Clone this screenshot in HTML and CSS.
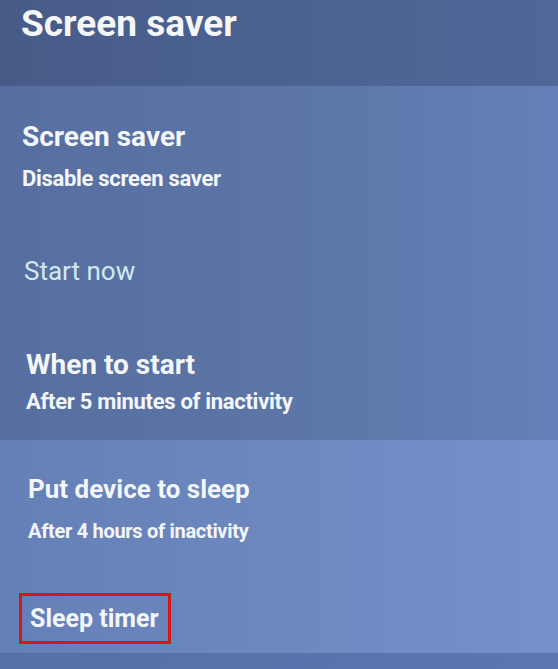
FILE: index.html
```html
<!DOCTYPE html>
<html lang="en">
<head>
<meta charset="utf-8">
<title>Screen saver</title>
<link rel="stylesheet" href="styles.css">
</head>
<body>
<div class="screen">
  <header class="header">
    <h1 class="page-title">Screen saver</h1>
  </header>
  <section class="group group-main">
    <div class="item item-first">
      <div class="item-title">Screen saver</div>
      <div class="item-sub">Disable screen saver</div>
    </div>
    <div class="item item-action">
      <div class="item-title action">Start now</div>
    </div>
    <div class="item item-when">
      <div class="item-title">When to start</div>
      <div class="item-sub sub-when">After 5 minutes of inactivity</div>
    </div>
  </section>
  <section class="group group-lower">
    <div class="item item-put">
      <div class="item-title title-small">Put device to sleep</div>
      <div class="item-sub sub-small">After 4 hours of inactivity</div>
    </div>
    <div class="item item-sleep">
      <div class="highlight">
        <div class="item-title title-sleep">Sleep timer</div>
      </div>
    </div>
  </section>
  <div class="group-bottom"></div>
</div>
</body>
</html>
```

FILE: styles.css
```css
html, body {
  margin: 0;
  padding: 0;
}
body {
  width: 558px;
  height: 669px;
  overflow: hidden;
  font-family: Roboto, "Liberation Sans", Arial, sans-serif;
  color: #f3f6fb;
  background: #5b77b0;
}
.screen {
  display: flex;
  flex-direction: column;
  height: 669px;
}
.header {
  height: 86px;
  box-sizing: border-box;
  padding: 2px 0 0 21px;
  background: linear-gradient(90deg, #475b87 0%, #4c6392 55%, #4f6799 100%);
}
.page-title {
  margin: 0;
  font-size: 37px;
  line-height: 44px;
  font-weight: bold;
  color: #f4f6fa;
}
.group-main {
  height: 354px;
  box-sizing: border-box;
  padding-top: 35px;
  background: linear-gradient(90deg, #566fa0 0%, #5c75a6 50%, #6480b8 100%);
}
.group-lower {
  height: 213px;
  box-sizing: border-box;
  padding-top: 33px;
  background: linear-gradient(90deg, #6580b6 0%, #6d89c0 55%, #7491cb 100%);
}
.group-bottom {
  flex: 1;
  background: linear-gradient(90deg, #5570a6 0%, #5b77b0 100%);
}
.item {
  padding-left: 22px;
}
.item-title {
  font-size: 28px;
  line-height: 32px;
  font-weight: bold;
}
.title-small {
  font-size: 26px;
}
.title-sleep {
  font-size: 25px;
  line-height: 30px;
}
.item-sub {
  margin-top: 12px;
  font-size: 22px;
  line-height: 28px;
  font-weight: bold;
  letter-spacing: -0.3px;
}
.sub-small {
  font-size: 20px;
}
.action {
  font-size: 26px;
  font-weight: normal;
  color: #d2e9f3;
}
.item-action {
  margin-top: 62px;
  padding-left: 24px;
}
.item-when {
  margin-top: 62px;
  padding-left: 26px;
}
.sub-when {
  margin-top: 7px;
}
.item-put {
  padding-left: 28px;
}
.item-sleep {
  margin-top: 48px;
  padding-left: 19px;
}
.highlight {
  display: inline-block;
  border: 3px solid #d8141c;
  padding: 8px 9px 7px 8px;
}
```
